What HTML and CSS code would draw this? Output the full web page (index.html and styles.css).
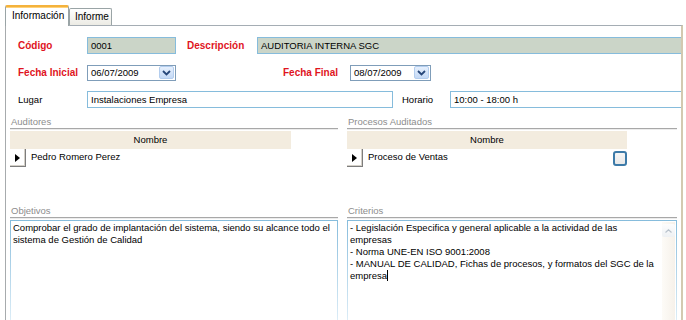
FILE: index.html
```html
<!DOCTYPE html>
<html lang="es">
<head>
<meta charset="utf-8">
<title>Auditoría</title>
<link rel="stylesheet" href="styles.css">
</head>
<body>
<div class="tabs">
  <div class="tab active">Información</div>
  <div class="tab">Informe</div>
</div>
<div class="panel">
  <div class="row">
    <span class="lbl req">Código</span>
    <div class="field ro w-codigo">0001</div>
    <span class="lbl req l-desc">Descripción</span>
    <div class="field ro grow">AUDITORIA INTERNA SGC</div>
  </div>
  <div class="row">
    <span class="lbl req">Fecha Inicial</span>
    <div class="field combo w-fi"><span class="val">06/07/2009</span><span class="drop"><svg width="9" height="6" viewBox="0 0 9 6"><polyline points="1,1 4.5,4.5 8,1" fill="none" stroke="#27477a" stroke-width="1.8"/></svg></span></div>
    <span class="lbl req l-ff">Fecha Final</span>
    <div class="field combo w-ff"><span class="val">08/07/2009</span><span class="drop"><svg width="9" height="6" viewBox="0 0 9 6"><polyline points="1,1 4.5,4.5 8,1" fill="none" stroke="#27477a" stroke-width="1.8"/></svg></span></div>
  </div>
  <div class="row">
    <span class="lbl">Lugar</span>
    <div class="field w-lugar">Instalaciones Empresa</div>
    <span class="lbl l-hor">Horario</span>
    <div class="field grow">10:00 - 18:00 h</div>
  </div>

  <div class="cols">
    <section class="col">
      <div class="sect">Auditores</div>
      <div class="grid">
        <div class="ghead">Nombre</div>
        <div class="grow-row">
          <span class="sel"><svg width="5" height="8" viewBox="0 0 5 8"><polygon points="0,0 5,4 0,8" fill="#000"/></svg></span>
          <span class="cell">Pedro Romero Perez</span>
        </div>
      </div>
      <div class="sect">Objetivos</div>
      <div class="memo">
        <div class="line">Comprobar el grado de implantación del sistema, siendo su alcance todo el</div>
        <div class="line">sistema de Gestión de Calidad</div>
      </div>
    </section>
    <section class="col">
      <div class="sect">Procesos Auditados</div>
      <div class="grid grid-r">
        <div class="ghead">Nombre</div>
        <div class="grow-row">
          <span class="sel"><svg width="5" height="8" viewBox="0 0 5 8"><polygon points="0,0 5,4 0,8" fill="#000"/></svg></span>
          <span class="cell">Proceso de Ventas</span>
          <span class="chk"></span>
        </div>
      </div>
      <div class="sect">Criterios</div>
      <div class="memo memo-scroll">
        <div class="memo-text">
          <div class="line">- Legislación Especifica y general aplicable a la actividad de las</div>
          <div class="line">empresas</div>
          <div class="line">- Norma UNE-EN ISO 9001:2008</div>
          <div class="line">- MANUAL DE CALIDAD, Fichas de procesos, y formatos del SGC de la</div>
          <div class="line">empresa<span class="caret"></span></div>
        </div>
        <div class="vscroll"><span class="up"><svg width="7" height="4" viewBox="0 0 7 4"><polyline points="0.5,3.5 3.5,0.8 6.5,3.5" fill="none" stroke="#b9c2cc" stroke-width="1.2"/></svg></span></div>
      </div>
    </section>
  </div>
</div>
</body>
</html>
```

FILE: styles.css
```css
* { box-sizing: border-box; }
html, body { margin: 0; padding: 0; background: #fff; overflow: hidden; }
body {
  width: 686px; height: 320px;
  font-family: "Liberation Sans", Arial, sans-serif;
  font-size: 9.5px;
  color: #000;
}

.tabs {
  display: flex;
  align-items: flex-end;
  height: 25px;
  padding: 5px 0 0 5px;
  position: relative;
  z-index: 1;
}
.tab {
  height: 17px;
  padding: 0 5px;
  border: 1px solid #9aa4a6;
  border-bottom: 0;
  border-radius: 2px 2px 0 0;
  background: linear-gradient(#ffffff, #ecebe4);
  font-size: 10px;
  line-height: 16px;
  color: #000;
}
.tab.active {
  height: 21px;
  width: 64px;
  padding: 0 6px;
  border-top: 2px solid #f4b23c;
  background: #fff;
  line-height: 18px;
  margin-bottom: -1px;
  box-shadow: inset 0 1px 0 #ffd27a;
}
.tab + .tab { width: 43px; }

.panel {
  margin-left: 5px;
  width: 678px;
  height: 300px;
  border-left: 1px solid #a7abad;
  border-top: 1px solid #a5adb4;
  border-right: 2px solid #d3c9b0;
  padding: 11px 0 0 12px;
  overflow: hidden;
}

.row {
  display: flex;
  align-items: center;
  height: 17px;
  margin-bottom: 10px;
}
.lbl { width: 69px; flex: none; white-space: nowrap; }
.lbl.req { color: #e0141e; font-weight: bold; font-size: 10px; }
.l-desc { margin-left: 11px; width: 70px; }
.l-ff { margin-left: 107px; width: 67px; }
.l-hor { margin-left: 9px; width: 48px; }

.field {
  height: 17px;
  border: 1px solid #86bcdc;
  background: #fff;
  padding: 0 3px;
  line-height: 15px;
  white-space: nowrap;
  flex: none;
}
.field.ro { background: #cbd5c8; }
.field.grow { flex: 1; border-right: 0; }
.w-codigo { width: 89px; }
.w-lugar { width: 306px; }
.combo {
  display: flex;
  align-items: center;
  justify-content: space-between;
  height: 16px;
  padding: 0 1px 0 3px;
  border-color: #7f9db9;
}
.w-fi { width: 89px; }
.w-ff { width: 81px; }
.drop {
  width: 15px; height: 13px;
  border: 1px solid #b3cdee;
  border-radius: 2px;
  background: linear-gradient(#e6f0fd, #c4d9f6);
  display: flex; align-items: center; justify-content: center;
}

.cols {
  display: grid;
  grid-template-columns: 328px 330px;
  column-gap: 9px;
  margin-left: -8px;
  margin-top: -2px;
}
.sect {
  height: 13px;
  line-height: 11px;
  color: #8d8d8d;
  font-size: 9.5px;
  border-bottom: 1px solid #a8a8a8;
  box-shadow: 0 1px 0 #ececec;
  padding-left: 1px;
}
.grid {
  margin-top: 2px;
  height: 74px;
  width: 281px;
}
.grid-r { width: 280px; }
.ghead {
  height: 18px;
  background: #f3ecdf;
  text-align: center;
  line-height: 18px;
}
.grow-row {
  display: flex;
  align-items: flex-start;
  height: 18px;
}
.sel {
  width: 16px; height: 18px;
  border-right: 1px solid #7d7d7d;
  border-bottom: 1px solid #7d7d7d;
  box-shadow: inset -1px -1px 0 #d4d0c8;
  display: flex; align-items: center; justify-content: center;
  flex: none;
}
.cell { padding-left: 5px; line-height: 15px; flex: 1; }
.chk {
  width: 14px; height: 15px;
  margin-top: 2px;
  border: 2px solid #3d7aa8;
  border-radius: 3px;
  background: linear-gradient(#f6f6f6, #e8e8e8);
  flex: none;
}

.memo {
  margin-top: 2px;
  height: 120px;
  border: 1px solid transparent;
  border-bottom: 0;
  border-image: linear-gradient(to bottom, #86bcdc, #d9ebf6 80%, #ffffff) 1;
  padding: 1px 2px;
  line-height: 12px;
}
.line { white-space: nowrap; }
.memo-scroll { display: flex; padding-right: 0; }
.memo-text { flex: 1; }
.caret { display: inline-block; width: 1px; height: 11px; background: #000; vertical-align: -2px; }
.vscroll {
  width: 13px;
  margin-right: 1px;
  background: linear-gradient(to right, #fdfbf7, #f6f1ea);
  display: flex; flex-direction: column; align-items: center;
}
.up {
  margin-top: 2px;
  width: 13px; height: 13px;
  border-radius: 2px;
  background: linear-gradient(#fdfdfd, #eef1f4);
  display: flex; align-items: center; justify-content: center;
}
```
